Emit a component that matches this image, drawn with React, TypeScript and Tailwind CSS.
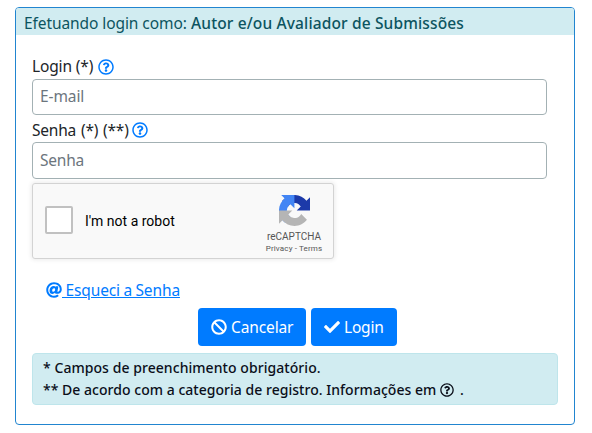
import { FaRegQuestionCircle, FaAt, FaBan, FaCheck } from "react-icons/fa";

function RecaptchaLogo() {
  return (
    <svg width="31" height="31" viewBox="0 0 64 64" className="block">
      <path fill="#1c3aa9" d="M64 31.955c0-.46-.011-.918-.032-1.373V4.574l-7.191 7.191C50.892 4.561 41.939-.025 31.914-.025c-10.432 0-19.7 4.968-25.568 12.665l11.787 11.91a15.63 15.63 0 0 1 4.777-5.363c2.06-1.607 4.979-2.922 9.004-2.922.486 0 .862.057 1.137.164 4.987.393 9.309 3.145 11.854 7.138l-8.344 8.343 27.439.045" />
      <path fill="#4285f4" d="M31.862.004c-.459.001-.915.012-1.369.033H4.562l7.17 7.17C4.549 13.074-.023 22.001-.023 31.996c0 10.402 4.953 19.642 12.628 25.493l11.875-11.753a15.6 15.6 0 0 1-5.347-4.763c-1.602-2.054-2.914-4.964-2.914-8.977 0-.485.057-.859.164-1.134.392-4.972 3.136-9.281 7.117-11.819l8.318 8.319.044-27.358" />
      <path fill="#b5b5b5" d="M.011 31.978c.001.46.011.918.033 1.373v26.008l7.19-7.191c5.885 7.204 14.838 11.79 24.863 11.79 10.433 0 19.701-4.968 25.569-12.665L45.879 39.383a15.63 15.63 0 0 1-4.777 5.363c-2.06 1.607-4.979 2.922-9.004 2.922-.486 0-.862-.057-1.137-.164-4.987-.393-9.31-3.145-11.854-7.138l8.343-8.343L.011 31.978" />
    </svg>
  );
}

export default function App() {
  return (
    <div className="h-[433px] w-[592px] bg-white pl-[15px] pt-[7px] font-['Noto_Sans',sans-serif] text-[15.5px] text-[#212529]">
      <div className="h-[418px] w-[560px] overflow-hidden rounded-[4px] border border-[#2185d0] bg-white">
        <div className="flex h-[27px] items-center whitespace-nowrap bg-[#d1ecf1] pl-2 pt-[4px] text-[#0c5460]">
          <span className="w-[167px] tracking-[-0.08px]">Efetuando login como:</span>
          <span className="font-medium tracking-[0.14px]">Autor e/ou Avaliador de Submissões</span>
        </div>
        <div className="flex flex-col pl-4 pt-[20px]">
          <label className="flex h-6 items-center whitespace-nowrap">
            <span className="w-[66px] tracking-[-0.15px]">Login (*)</span>
            <FaRegQuestionCircle className="mb-px size-4 text-[#007bff]" />
          </label>
          <input
            className="h-[36px] w-[515px] rounded-[4px] border border-[#a3b1b4] bg-white px-[7px] pb-[2px] tracking-[-0.1px] placeholder:text-[#6c757d] placeholder:opacity-100"
            placeholder="E-mail"
          />
          <label className="mt-[3px] flex h-6 items-center whitespace-nowrap">
            <span className="w-[100px] pt-[2px] tracking-[-0.2px] [word-spacing:1px]">Senha (*) (**)</span>
            <FaRegQuestionCircle className="size-4 text-[#007bff]" />
          </label>
          <input
            type="password"
            className="h-[37px] w-[515px] rounded-[4px] border border-[#a3b1b4] bg-white px-[7px] pb-[2px] tracking-[-0.2px] placeholder:text-[#6c757d] placeholder:opacity-100"
            placeholder="Senha"
          />
          <div className="mt-1 flex h-[76px] w-[302px] items-center rounded-[3px] border border-[#d3d3d3] bg-[#f9f9f9] pl-3 font-[Roboto,sans-serif] text-black shadow-[0_0_4px_1px_rgba(0,0,0,0.08)]">
            <span className="mb-[2px] size-7 rounded-[2px] border-2 border-[#c1c1c1] bg-white" />
            <span className="ml-3 w-[175px] text-[14px]">I'm not a robot</span>
            <div className="flex w-[68px] flex-col items-center whitespace-nowrap pt-[7px] text-[#555]">
              <RecaptchaLogo />
              <span className="mt-[4px] text-[10px] leading-[14px]">reCAPTCHA</span>
              <span className="text-[8px] leading-[10px] tracking-[0.15px]">Privacy - Terms</span>
            </div>
          </div>
          <a className="mt-[19px] flex h-6 items-center whitespace-nowrap pl-[14px] text-[#007bff]">
            <FaAt className="size-4" />
            <span className="whitespace-pre pt-[2px] tracking-[-0.13px] underline [word-spacing:-0.4px]"> Esqueci a Senha</span>
          </a>
          <div className="mt-[6px] flex gap-[5px] pl-[166px] text-white">
            <button className="flex h-[38px] w-[108px] items-center gap-1 whitespace-nowrap rounded-[4px] bg-[#007bff] pl-[13px] tracking-[-0.12px]">
              <FaBan className="size-4" />
              <span className="pt-[2px]">Cancelar</span>
            </button>
            <button className="flex h-[38px] w-[86px] items-center gap-1 whitespace-nowrap rounded-[4px] bg-[#007bff] pl-[13px] tracking-[-0.2px]">
              <FaCheck className="size-4" />
              <span className="pt-[2px]">Login</span>
            </button>
          </div>
          <div className="mt-[7px] h-[52px] w-[526px] whitespace-nowrap rounded-[4px] border border-[#bee5eb] bg-[#d1ecf1] pl-[10px] pt-[3px] text-[14px] font-medium leading-[22px] text-[#0b0f1a]">
            <p className="tracking-[0.06px]">* Campos de preenchimento obrigatório.</p>
            <p className="flex items-center">
              <span className="w-[397px] tracking-[0.03px]">** De acordo com a categoria de registro. Informações em</span>
              <FaRegQuestionCircle className="mb-px size-[14px]" />
              <span className="ml-[6px]">.</span>
            </p>
          </div>
        </div>
      </div>
    </div>
  );
}
